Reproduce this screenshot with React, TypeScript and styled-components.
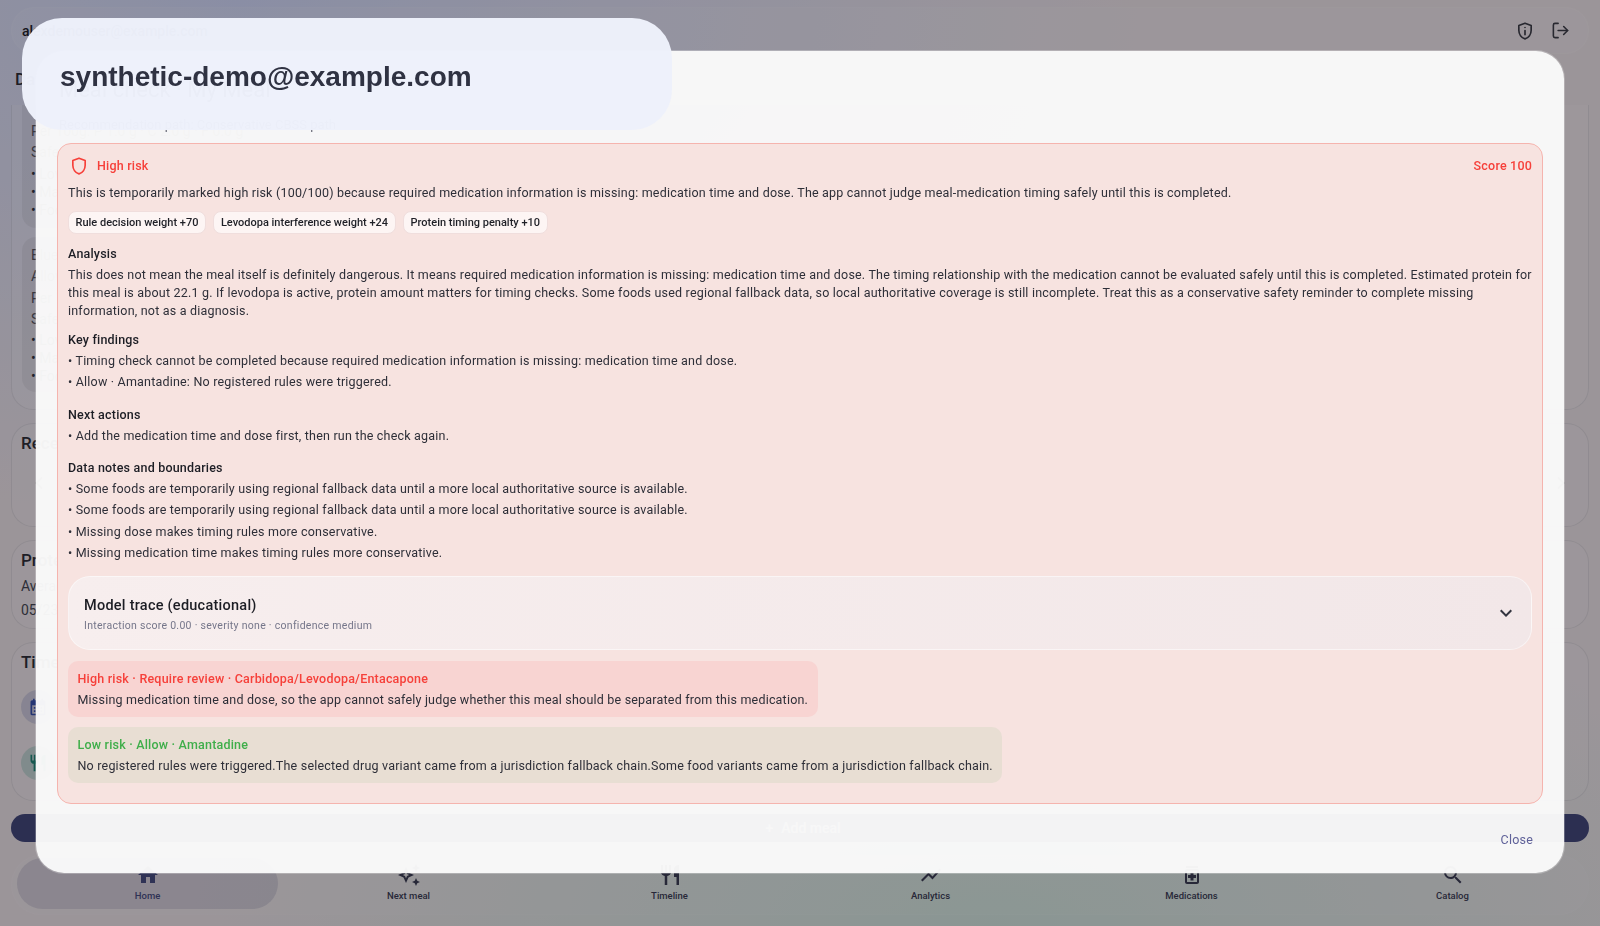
import styled, { createGlobalStyle } from 'styled-components';
import { ChevronLeft, ChevronRight, LogOut } from 'lucide-react';
import {
  MdCalendarMonth,
  MdExpandMore,
  MdHome,
  MdOutlineAutoAwesome,
  MdOutlineMedication,
  MdRestaurant,
  MdSearch,
  MdShowChart,
} from 'react-icons/md';

const GlobalStyle = createGlobalStyle`
  html, body {
    margin: 0;
    height: 100%;
    overflow: hidden;
    font-family: Roboto, "Noto Sans", sans-serif;
    color: #24252d;
  }
  #root { height: 100%; }
`;

const Page = styled.div`
  position: relative;
  height: 926px;
  overflow: hidden;
  box-sizing: border-box;
  padding: 7px 11px 0;
  background:
    radial-gradient(ellipse 900px 520px at 15% 0%, #d2d9f8 0%, rgba(210, 217, 248, 0) 100%),
    radial-gradient(ellipse 800px 360px at 62% 100%, #d2e6dc 0%, rgba(210, 230, 220, 0) 100%),
    #eee4e6;
`;

const Scrim = styled.div`
  position: absolute;
  inset: 0;
  background: rgba(20, 20, 30, 0.38);
`;

const TopBar = styled.header`
  height: 47px;
  display: flex;
  align-items: center;
  padding: 0 18px 0 10px;
  gap: 16px;
  border-radius: 24px;
  background: rgba(255, 255, 255, 0.1);
  border: 1px solid rgba(255, 255, 255, 0.06);
  box-sizing: border-box;
  font-size: 14px;
  font-weight: 500;
  color: #15151a;
  svg {
    color: #34343c;
  }
`;

const Account = styled.span`
  margin-right: auto;
`;

const PageTitle = styled.h1`
  margin: 14px 0 0 4px;
  height: 37px;
  font-size: 17px;
  line-height: 22px;
  font-weight: 500;
`;

const Card = styled.section<{ $height: number }>`
  height: ${(p) => p.$height}px;
  box-sizing: border-box;
  margin-bottom: 13px;
  padding: 8px 9px;
  border-radius: 22px;
  background: rgba(255, 255, 255, 0.1);
  border: 1px solid rgba(120, 120, 130, 0.16);
  font-size: 14px;
`;

const SummaryCard = styled(Card)`
  padding: 0 40px 0 10px;
  border-radius: 0 0 22px 22px;
  border-top: 0;
  background: rgba(255, 255, 255, 0.14);
`;

const CardTitle = styled.h2`
  margin: 0 0 6px;
  font-size: 17px;
  line-height: 22px;
  font-weight: 500;
`;

const Recommendation = styled.div<{ $top: number; $bottom: number }>`
  padding: ${(p) => p.$top}px 9px ${(p) => p.$bottom}px;
  margin-bottom: 9px;
  border-radius: 0 0 14px 14px;
  background: rgba(120, 120, 135, 0.12);
  font-size: 14px;
  line-height: 18px;
  & + & {
    border-radius: 14px;
  }
`;

const MutedLine = styled.div`
  margin-bottom: 3.4px;
  color: #4c4d58;
`;

const TrendLine = styled.div`
  margin-bottom: 6px;
  line-height: 18px;
  color: #3c3d48;
`;

const Reason = styled.div`
  color: #2c2d36;
`;

const Carousel = styled.div`
  display: flex;
  align-items: center;
  gap: 200px;
  padding: 13px 8px;
  color: #44454f;
`;

const CarouselEnd = styled.span`
  margin-left: auto;
  display: flex;
`;

const TimelineRow = styled.div`
  display: flex;
  align-items: center;
  gap: 12px;
  height: 34px;
  margin-top: 17px;
  & + & {
    margin-top: 22px;
  }
`;

const TimelineDot = styled.span<{ $tone: string; $bg: string }>`
  width: 34px;
  height: 34px;
  flex: none;
  display: grid;
  place-items: center;
  border-radius: 50%;
  color: ${(p) => p.$tone};
  background: ${(p) => p.$bg};
`;

const TimelineText = styled.div`
  font-size: 14px;
  line-height: 19px;
`;

const AddButton = styled.button`
  display: flex;
  align-items: center;
  justify-content: center;
  gap: 8px;
  width: 100%;
  height: 28px;
  padding: 0 0 0 6px;
  border: 0;
  border-radius: 14px;
  background: #3a3f72;
  color: #fff;
  font: 500 14px Roboto, sans-serif;
`;

const NavBar = styled.nav`
  display: grid;
  grid-template-columns: repeat(6, 1fr);
  height: 60px;
  box-sizing: border-box;
  margin-top: 13px;
  padding: 2px 5px 5px;
  border-radius: 30px;
  background: rgba(255, 255, 255, 0.05);
  border: 1px solid rgba(255, 255, 255, 0.05);
`;

const NavItem = styled.a<{ $active?: boolean }>`
  display: flex;
  flex-direction: column;
  align-items: center;
  gap: 1px;
  padding-top: 5px;
  border-radius: 26px;
  font-size: 9.5px;
  line-height: 15px;
  font-weight: 500;
  color: ${(p) => (p.$active ? '#3f4478' : '#33344a')};
  background: ${(p) => (p.$active ? 'rgba(80, 85, 125, 0.17)' : 'transparent')};
`;

const Modal = styled.div`
  position: absolute;
  top: 51px;
  left: 36px;
  right: 36px;
  bottom: 53px;
  display: flex;
  flex-direction: column;
  box-sizing: border-box;
  padding: 0 21px;
  border-radius: 28px;
  background: rgba(250, 250, 250, 0.97);
  backdrop-filter: blur(0.6px);
  box-shadow: 0 0 0 1px rgba(255, 255, 255, 0.25);
`;

const ModalHeader = styled.div`
  height: 92px;
  flex: none;
  padding: 23px 0 0 2px;
  box-sizing: border-box;
`;

const ModalTitle = styled.h2`
  margin: 0;
  font-size: 22px;
  line-height: 32px;
  font-weight: 400;
  color: #2b2c36;
`;

const ModalSub = styled.div`
  margin-top: 10px;
  font-size: 13px;
  line-height: 18px;
  color: #666775;
`;

const RiskPanel = styled.div`
  flex: none;
  box-sizing: border-box;
  height: 661px;
  padding: 12px 10px 0;
  border: 1px solid #f5b4ae;
  border-radius: 14px;
  background: rgba(247, 225, 222, 0.9);
  font-size: 12.5px;
  line-height: 18px;
  letter-spacing: 0.2px;
  color: #2e2f38;
`;

const RiskHead = styled.div`
  display: flex;
  align-items: center;
  gap: 8px;
  height: 20px;
  padding-left: 1px;
  color: #f6403a;
  font-weight: 500;
`;

const RiskScore = styled.span`
  margin-left: auto;
`;

const Chips = styled.div`
  display: flex;
  gap: 7.5px;
  margin-top: 9px;
`;

const Chip = styled.span`
  height: 23px;
  box-sizing: border-box;
  padding: 0 6.5px;
  display: flex;
  align-items: center;
  border-radius: 8px;
  border: 1px solid #f0dedd;
  background: #fdf5f4;
  font-size: 11px;
  letter-spacing: 0;
  font-weight: 500;
  color: #1f2027;
`;

const Section = styled.h3<{ $top: number }>`
  margin: ${(p) => p.$top}px 0 3px;
  font-size: 12.5px;
  line-height: 18px;
  font-weight: 500;
  color: #1c1d24;
`;

const Text = styled.p<{ $top?: number }>`
  margin: ${(p) => p.$top ?? 0}px 0 0;
`;

const Bullets = styled.ul`
  margin: 0;
  padding: 0;
  list-style: none;
  display: flex;
  flex-direction: column;
  gap: 3.2px;
`;

const ModelTrace = styled.div`
  display: flex;
  align-items: center;
  justify-content: space-between;
  box-sizing: border-box;
  height: 74px;
  margin-top: 14px;
  padding: 0 13px 0 15px;
  border-radius: 22px;
  border: 1.5px solid rgba(255, 255, 255, 0.5);
  background: linear-gradient(90deg, #f7eeee, #f2e7e8);
`;

const TraceText = styled.div`
  padding-top: 5px;
`;

const TraceTitle = styled.div`
  font-size: 14.5px;
  line-height: 20px;
  letter-spacing: 0.25px;
  font-weight: 500;
  color: #1c1d24;
`;

const TraceSub = styled.div`
  margin-top: 2px;
  font-size: 10.5px;
  line-height: 16px;
  letter-spacing: 0.28px;
  color: #75768a;
`;

const RuleBox = styled.div<{ $tint: string; $top: number }>`
  width: fit-content;
  box-sizing: border-box;
  height: 56px;
  margin-top: ${(p) => p.$top}px;
  padding: 9px 9.5px 0;
  border-radius: 10px;
  background: ${(p) => p.$tint};
`;

const RuleTitle = styled.div<{ $tone: string }>`
  margin-bottom: 3px;
  color: ${(p) => p.$tone};
  font-weight: 500;
`;

const ModalFooter = styled.div`
  flex: 1;
  min-height: 0;
  display: flex;
  justify-content: flex-end;
  padding-right: 10px;
`;

const CloseButton = styled.button`
  border: 0;
  background: none;
  height: 18px;
  margin-top: 27px;
  padding: 0;
  font: 400 12.5px/18px Roboto, sans-serif;
  letter-spacing: 0.2px;
  color: #5f6199;
`;

const EmailPill = styled.div`
  position: absolute;
  top: 18px;
  left: 22px;
  width: 650px;
  height: 112px;
  box-sizing: border-box;
  display: flex;
  align-items: center;
  padding: 6px 0 0 38px;
  border-radius: 40px;
  background: rgba(238, 241, 251, 0.98);
  font: 700 28px "Liberation Sans", Arial, sans-serif;
  color: #2f3242;
`;

const summaries = [
  {
    top: 17,
    bottom: 9,
    lines: [
      'Per 100g: P 1.0 g · C 2.0 g · F 0.0 g',
      'Safety: Schedule 0.82 · Facts 1.00 · Contact penalty 0.0 · Window penalty 0.0 · Swallowing penalty 0.0 · Template',
    ],
  },
  {
    top: 9,
    bottom: 7,
    lines: [
      'Blueberries',
      'Allow',
      'Per 100g: P 0.7 g · C 14.5 g · F 0.3 g',
      'Safety: Schedule 0.82 · Facts 1.00 · Contact penalty 0.0',
    ],
  },
];

const reasons = ['Lower protein preferred', 'Matches the meal template', 'Food knowledge for this region is using a fallback chain'];

const navItems = [
  { label: 'Home', icon: <MdHome size={24} />, active: true },
  { label: 'Next meal', icon: <MdOutlineAutoAwesome size={24} /> },
  { label: 'Timeline', icon: <MdRestaurant size={24} /> },
  { label: 'Analytics', icon: <MdShowChart size={24} /> },
  { label: 'Medications', icon: <MdOutlineMedication size={24} /> },
  { label: 'Catalog', icon: <MdSearch size={24} /> },
];

const fallbackNote = '• Some foods are temporarily using regional fallback data until a more local authoritative source is available.';

function ShieldIcon({ info }: { info?: boolean }) {
  return (
    <svg width="20" height="20" viewBox="0 0 24 24" fill="none" stroke="currentColor" strokeWidth="2" strokeLinecap="round" strokeLinejoin="round">
      <path d="M12 2.6 4.6 5.4v5.7c0 4.8 3.1 9.1 7.4 10.3 4.3-1.2 7.4-5.5 7.4-10.3V5.4z" />
      {info && <path d="M12 11.5v5M12 7.8h.01" />}
    </svg>
  );
}

export default function App() {
  return (
    <Page>
      <GlobalStyle />
      <TopBar>
        <Account>alexdemouser@example.com</Account>
        <ShieldIcon info />
        <LogOut size={19} />
      </TopBar>
      <PageTitle>Daily recommendations</PageTitle>
      <SummaryCard $height={305}>
        {summaries.map((item) => (
          <Recommendation key={item.lines[0]} $top={item.top} $bottom={item.bottom}>
            {item.lines.map((line) => (
              <MutedLine key={line}>{line}</MutedLine>
            ))}
            {reasons.map((reason) => (
              <Reason key={reason}>• {reason}</Reason>
            ))}
          </Recommendation>
        ))}
      </SummaryCard>
      <Card $height={104}>
        <CardTitle>Recent meals (7 days)</CardTitle>
        <Carousel>
          <ChevronLeft size={20} />
          <span>My Meal · 3 items</span>
          <CarouselEnd>
            <ChevronRight size={20} />
          </CarouselEnd>
        </Carousel>
      </Card>
      <Card $height={89}>
        <CardTitle>Protein trend</CardTitle>
        <TrendLine>Average protein 22.1 g</TrendLine>
        <TrendLine>05/23 12:30</TrendLine>
      </Card>
      <Card $height={159}>
        <CardTitle>Timeline</CardTitle>
        <TimelineRow>
          <TimelineDot $tone="#2f49a8" $bg="rgba(90, 100, 170, 0.22)">
            <MdCalendarMonth size={20} />
          </TimelineDot>
          <TimelineText>
            Medication
            <br />
            05/23 13:30 · Madopar · 100mg
          </TimelineText>
        </TimelineRow>
        <TimelineRow>
          <TimelineDot $tone="#17806f" $bg="rgba(60, 160, 140, 0.25)">
            <MdRestaurant size={20} />
          </TimelineDot>
          <TimelineText>
            My Meal
            <br />
            05/23 12:30 · 3 items
          </TimelineText>
        </TimelineRow>
      </Card>
      <AddButton>
        <span>+</span>
        Add meal
      </AddButton>
      <NavBar>
        {navItems.map((item) => (
          <NavItem key={item.label} $active={item.active}>
            {item.icon}
            {item.label}
          </NavItem>
        ))}
      </NavBar>
      <Scrim />
      <Modal>
        <ModalHeader>
          <ModalTitle>Meal check · My Meal</ModalTitle>
          <ModalSub>Recommendation path: Conservative CBSS path</ModalSub>
        </ModalHeader>
        <RiskPanel>
          <RiskHead>
            <ShieldIcon />
            High risk
            <RiskScore>Score 100</RiskScore>
          </RiskHead>
          <Text $top={8}>
            This is temporarily marked high risk (100/100) because required medication information is missing: medication time and dose. The app cannot judge meal-medication timing safely until this is completed.
          </Text>
          <Chips>
            <Chip>Rule decision weight +70</Chip>
            <Chip>Levodopa interference weight +24</Chip>
            <Chip>Protein timing penalty +10</Chip>
          </Chips>
          <Section $top={11}>Analysis</Section>
          <Text>
            This does not mean the meal itself is definitely dangerous. It means required medication information is missing: medication time and dose. The timing relationship with the medication cannot be evaluated safely until this is completed. Estimated protein for this meal is about 22.1 g. If levodopa is active, protein amount matters for timing checks. Some foods used regional fallback data, so local authoritative coverage is still incomplete. Treat this as a conservative safety reminder to complete missing information, not as a diagnosis.
          </Text>
          <Section $top={11}>Key findings</Section>
          <Bullets>
            <li>• Timing check cannot be completed because required medication information is missing: medication time and dose.</li>
            <li>• Allow · Amantadine: No registered rules were triggered.</li>
          </Bullets>
          <Section $top={15}>Next actions</Section>
          <Bullets>
            <li>• Add the medication time and dose first, then run the check again.</li>
          </Bullets>
          <Section $top={14}>Data notes and boundaries</Section>
          <Bullets>
            <li>{fallbackNote}</li>
            <li>{fallbackNote}</li>
            <li>• Missing dose makes timing rules more conservative.</li>
            <li>• Missing medication time makes timing rules more conservative.</li>
          </Bullets>
          <ModelTrace>
            <TraceText>
              <TraceTitle>Model trace (educational)</TraceTitle>
              <TraceSub>Interaction score 0.00 · severity none · confidence medium</TraceSub>
            </TraceText>
            <MdExpandMore size={24} color="#33343f" />
          </ModelTrace>
          <RuleBox $tint="#f8d4d2" $top={11.5}>
            <RuleTitle $tone="#f6403a">High risk · Require review · Carbidopa/Levodopa/Entacapone</RuleTitle>
            Missing medication time and dose, so the app cannot safely judge whether this meal should be separated from this medication.
          </RuleBox>
          <RuleBox $tint="#e8ded3" $top={9.5}>
            <RuleTitle $tone="#3fae4a">Low risk · Allow · Amantadine</RuleTitle>
            No registered rules were triggered.The selected drug variant came from a jurisdiction fallback chain.Some food variants came from a jurisdiction fallback chain.
          </RuleBox>
        </RiskPanel>
        <ModalFooter>
          <CloseButton>Close</CloseButton>
        </ModalFooter>
      </Modal>
      <EmailPill>synthetic-demo@example.com</EmailPill>
    </Page>
  );
}
